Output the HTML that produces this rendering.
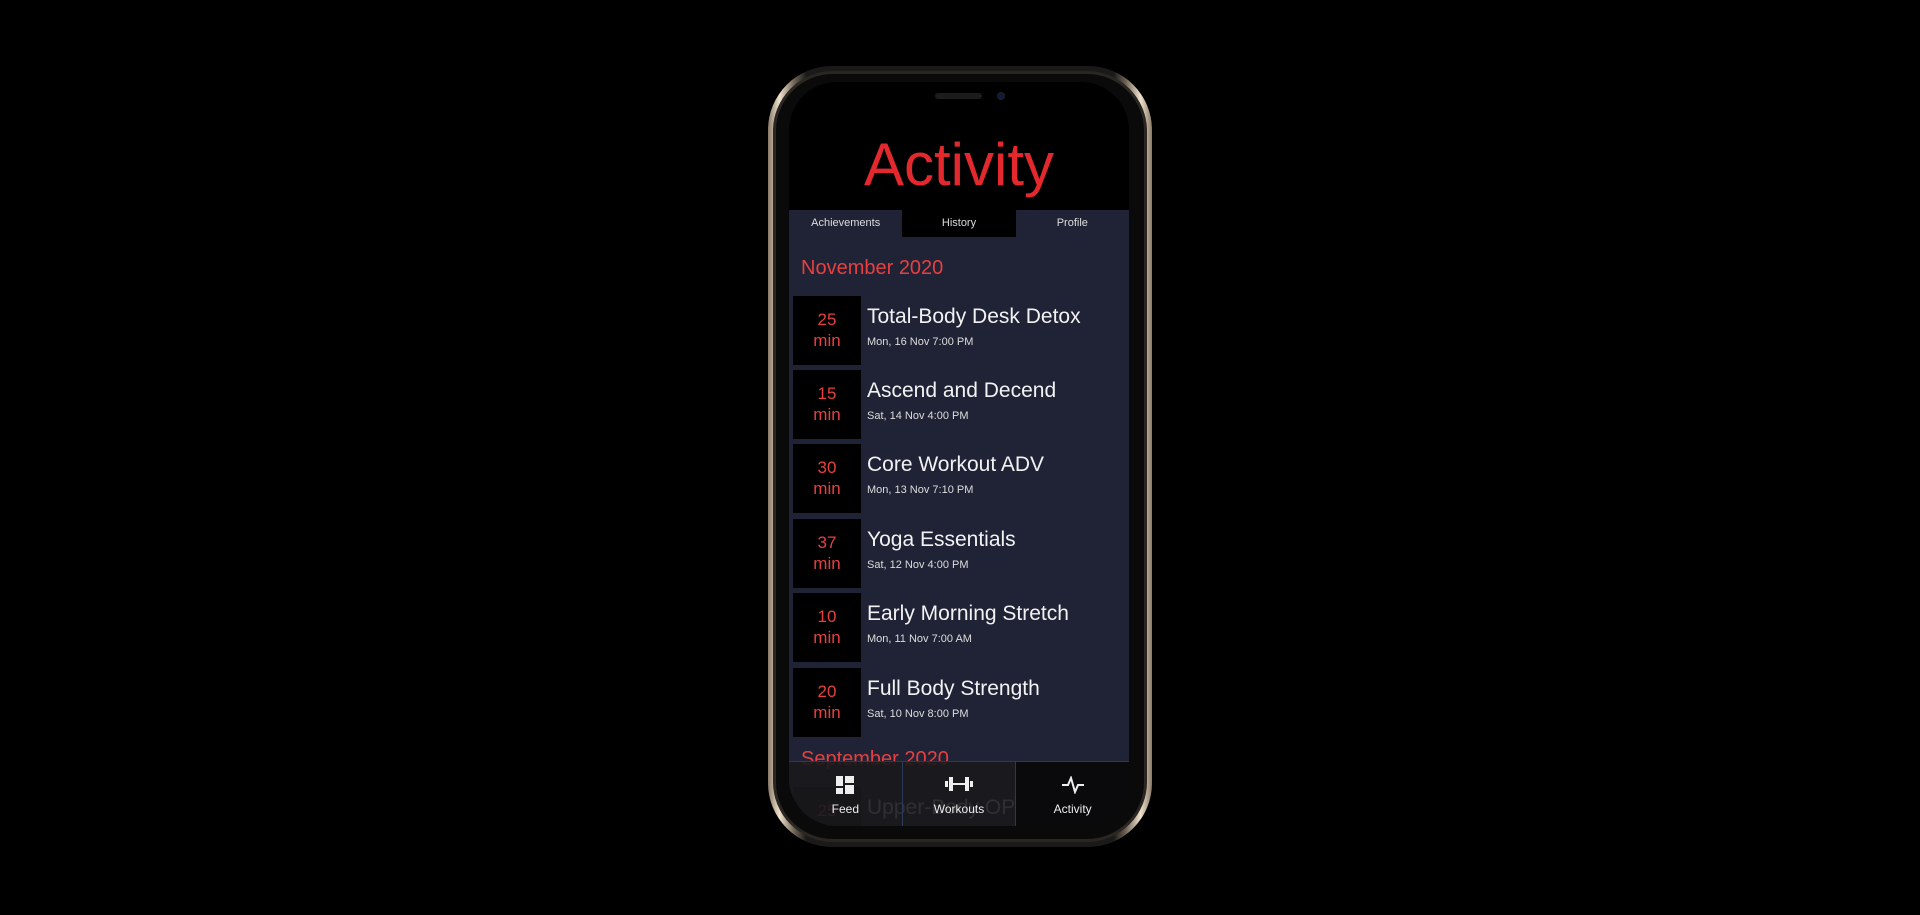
<!DOCTYPE html>
<html><head><style>
*{margin:0;padding:0;box-sizing:border-box}
body{width:1920px;height:915px;background:#000;position:relative;overflow:hidden;font-family:"Liberation Sans",sans-serif}
.frame{position:absolute;left:768px;top:66px;width:384px;height:781px;border-radius:64px;background:linear-gradient(90deg,#8a7a68,#efe2cc 3%,#6a5e50 7%,#1a1a1a 10%,#1a1a1a 90%,#6a5e50 93%,#efe2cc 97%,#8a7a68);}
.frame2{position:absolute;left:773px;top:71px;width:374px;height:771px;border-radius:60px;background:#0a0a0a;border:3px solid #2a2622}
.screen{position:absolute;left:789px;top:82px;width:340px;height:744px;border-radius:48px;background:#000;overflow:hidden}
.speaker{position:absolute;left:935px;top:93px;width:47px;height:6px;border-radius:3px;background:#1c1c1c}
.cam{position:absolute;left:997px;top:92px;width:8px;height:8px;border-radius:50%;background:#0d1a3a;border:1px solid #222}
.title{position:absolute;left:0;width:340px;top:48px;text-align:center;color:#e3282e;font-size:60px;line-height:70px}
.tabs{position:absolute;top:128px;left:0;width:340px;height:27px;display:flex;background:#1f2335;font-size:11px;color:#ddd}
.tabs div{flex:1;text-align:center;line-height:27px}
.tabs .on{background:#000}
.content{position:absolute;top:155px;left:0;width:340px;height:600px;background:#1f2335}
.month{position:absolute;left:12px;color:#e64040;font-size:20px}
.item{position:absolute;left:4px;width:336px;height:69px}
.box{position:absolute;left:0;top:0;width:68px;height:69px;background:#000;color:#e64040;font-size:17px;text-align:center;line-height:21px;padding-top:13px}
.name{position:absolute;left:74px;top:9px;color:#f2f2f2;font-size:21px;white-space:nowrap}
.date{position:absolute;left:74px;top:40px;color:#ddd;font-size:11px;white-space:nowrap}
.nav{position:absolute;left:0;top:679px;width:340px;height:65px;display:flex;border-top:1px solid #2b3a5a}
.nav div{flex:1;background:rgba(26,26,28,.9);color:#eee;font-size:12px;text-align:center;padding-top:40px;position:relative;border-right:1px solid #2b3a5a}
.nav div:last-child{background:rgba(10,10,12,.95);border-right:none}
.nav svg{position:absolute;left:50%;top:14px;transform:translateX(-50%)}
</style></head><body>
<div class="frame"></div><div class="frame2"></div>
<div class="screen">
<div class="title">Activity</div>
<div class="tabs"><div>Achievements</div><div class="on">History</div><div>Profile</div></div>
<div class="content">
<div class="month" style="top:17px;line-height:28px">November 2020</div>
<div class="item" style="top:59px"><div class="box">25<br>min</div><div class="name">Total-Body Desk Detox</div><div class="date">Mon, 16 Nov 7:00 PM</div></div>
<div class="item" style="top:133px"><div class="box">15<br>min</div><div class="name">Ascend and Decend</div><div class="date">Sat, 14 Nov 4:00 PM</div></div>
<div class="item" style="top:207px"><div class="box">30<br>min</div><div class="name">Core Workout ADV</div><div class="date">Mon, 13 Nov 7:10 PM</div></div>
<div class="item" style="top:282px"><div class="box">37<br>min</div><div class="name">Yoga Essentials</div><div class="date">Sat, 12 Nov 4:00 PM</div></div>
<div class="item" style="top:356px"><div class="box">10<br>min</div><div class="name">Early Morning Stretch</div><div class="date">Mon, 11 Nov 7:00 AM</div></div>
<div class="item" style="top:431px"><div class="box">20<br>min</div><div class="name">Full Body Strength</div><div class="date">Sat, 10 Nov 8:00 PM</div></div>
<div class="month" style="top:508px;line-height:28px">September 2020</div>
<div class="item" style="top:550px"><div class="box">25<br>min</div><div class="name">Upper-Body OP</div></div>
</div>
<div class="nav">
<div><svg width="18" height="18" viewBox="0 0 18 18"><rect x="0" y="0" width="7" height="10" fill="#eee"/><rect x="9" y="0" width="9" height="7" fill="#eee"/><rect x="0" y="12" width="7" height="6" fill="#eee"/><rect x="9" y="9" width="9" height="9" fill="#eee"/></svg>Feed</div>
<div><svg width="28" height="16" viewBox="0 0 28 16"><rect x="0" y="5" width="3" height="6" fill="#eee"/><rect x="4" y="1" width="4" height="14" fill="#eee"/><rect x="8" y="7" width="12" height="2" fill="#eee"/><rect x="20" y="1" width="4" height="14" fill="#eee"/><rect x="25" y="5" width="3" height="6" fill="#eee"/></svg>Workouts</div>
<div><svg width="22" height="18" viewBox="0 0 22 18"><path d="M0 9 H6 L9 2 L13 16 L16 9 H22" fill="none" stroke="#eee" stroke-width="2"/></svg>Activity</div>
</div>
</div>
<div class="speaker"></div><div class="cam"></div>
</body></html>
